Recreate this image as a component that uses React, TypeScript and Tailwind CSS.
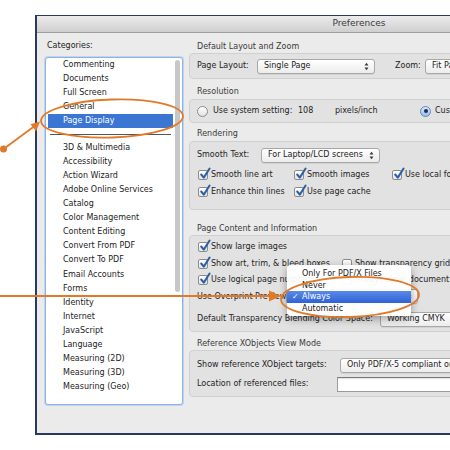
import React from "react";

const Arrows = () => (
  <svg width="5" height="9" viewBox="0 0 5 9" className="shrink-0">
    <path d="M0.5 3.5 L2.5 0.8 L4.5 3.5 Z" fill="#3a3a3a" />
    <path d="M0.5 5.5 L2.5 8.2 L4.5 5.5 Z" fill="#3a3a3a" />
  </svg>
);

function Sel({ cls, text }: { cls: string; text: string }) {
  return (
    <div
      className={`${cls} h-[15px] shrink-0 flex items-center justify-between pl-[6px] pr-[5px] rounded-[3px] border border-[#a8a8a8] bg-gradient-to-b from-white to-[#ececec] shadow-[0_1px_0_rgba(0,0,0,0.07)]`}
    >
      <span className="whitespace-nowrap overflow-hidden">{text}</span>
      <Arrows />
    </div>
  );
}

const Check = () => (
  <span className="relative w-[10px] h-[10px] shrink-0 rounded-[2px] border border-[#8c8c8c] bg-gradient-to-b from-white to-[#e4e4e4]">
    <svg className="absolute left-[0px] top-[-4px]" width="12" height="13" viewBox="0 0 12 13">
      <path d="M2.2 7.5 L4.8 10.6 L10.6 1.5" stroke="#2c5ea8" strokeWidth="2" fill="none" strokeLinecap="round" strokeLinejoin="round" />
    </svg>
  </span>
);

const Box = () => (
  <span className="w-[10px] h-[10px] shrink-0 rounded-[2px] border border-[#8c8c8c] bg-gradient-to-b from-white to-[#e8e8e8]" />
);

const items1 = ["Commenting", "Documents", "Full Screen", "General"];
const items2 = [
  "3D & Multimedia",
  "Accessibility",
  "Action Wizard",
  "Adobe Online Services",
  "Catalog",
  "Color Management",
  "Content Editing",
  "Convert From PDF",
  "Convert To PDF",
  "Email Accounts",
  "Forms",
  "Identity",
  "Internet",
  "JavaScript",
  "Language",
  "Measuring (2D)",
  "Measuring (3D)",
  "Measuring (Geo)",
];

function Row({ children }: { children: React.ReactNode }) {
  return <div className="h-[14.1px] flex items-center pl-[15px] whitespace-nowrap">{children}</div>;
}

function Header({ cls, text }: { cls: string; text: string }) {
  return <div className={`${cls} h-[12px] flex items-center pl-[8px] text-[#3a3a3a] whitespace-nowrap`}>{text}</div>;
}

export default function App() {
  return (
    <div className="w-[450px] h-[450px] bg-white overflow-hidden relative font-['DejaVu_Sans',sans-serif] text-[8px] text-[#222]">
      <div className="pt-[15px] pl-[35px]">
        <div className="w-[646px] h-[420px] border-l-2 border-t border-b-2 border-[#2a3a5c] flex flex-col overflow-hidden">
          <div className="h-[17px] shrink-0 bg-gradient-to-b from-[#ececec] to-[#cfcfcf] border-b border-[#9e9e9e] flex items-center justify-center text-[9px] text-[#3a3a3a]">
            Preferences
          </div>
          <div className="flex-1 bg-[#ebebeb] flex">
            {/* Left column */}
            <div className="w-[152px] shrink-0 pl-[8px] pt-[7px] flex flex-col">
              <div className="h-[12px] flex items-center pl-[2px]">Categories:</div>
              <div className="mt-[5px] w-[138px] h-[348px] border border-[#8fb2e2] ring-1 ring-[#bfd4ef] rounded-[3px] bg-white flex">
                <div className="w-[127px] pl-[2px] flex flex-col">
                  {items1.map((t) => (
                    <Row key={t}>{t}</Row>
                  ))}
                  <div className="h-[13.3px] flex items-center pl-[15px] bg-[#3a76d2] text-white whitespace-nowrap">
                    Page Display
                  </div>
                  <div className="h-[13px] flex items-center px-[2px]">
                    <div className="w-full h-px bg-[#555]" />
                  </div>
                  {items2.map((t) => (
                    <Row key={t}>{t}</Row>
                  ))}
                </div>
                <div className="flex-1 pt-[2px] flex justify-center">
                  <div className="w-[5px] h-[232px] rounded-full bg-[#c7c7c7]" />
                </div>
              </div>
            </div>

            {/* Right column */}
            <div className="flex-1 pt-[8px] flex flex-col pr-[12px]">
              <Header cls="" text="Default Layout and Zoom" />
              <div className="h-[26px] border border-[#d0d0d0] bg-[#e2e2e2] rounded-[4px] flex items-center pl-[7px]">
                <div className="w-[60px] whitespace-nowrap">Page Layout:</div>
                <Sel cls="w-[118px]" text="Single Page" />
                <div className="ml-[20px] w-[30px]">Zoom:</div>
                <Sel cls="w-[110px]" text="Fit Page" />
              </div>

              <Header cls="mt-[7px]" text="Resolution" />
              <div className="mt-[1px] h-[24px] border border-[#d0d0d0] bg-[#e2e2e2] rounded-[4px] flex items-center pl-[7px] whitespace-nowrap">
                <span className="w-[11px] h-[11px] shrink-0 rounded-full border border-[#8c8c8c] bg-gradient-to-b from-white to-[#e2e2e2]" />
                <div className="ml-[5px] w-[85px]">Use system setting:</div>
                <div className="w-[37px]">108</div>
                <div className="w-[85px]">pixels/inch</div>
                <span className="w-[11px] h-[11px] shrink-0 rounded-full border border-[#5f86bf] bg-gradient-to-b from-[#dbe8f8] to-[#9dbde6] flex items-center justify-center">
                  <span className="w-[4px] h-[4px] rounded-full bg-[#1d2f50]" />
                </span>
                <div className="ml-[4px]">Custom resolution:</div>
              </div>

              <Header cls="mt-[5px]" text="Rendering" />
              <div className="mt-[1px] h-[69px] border border-[#d0d0d0] bg-[#e2e2e2] rounded-[4px] flex flex-col pt-[5px] pl-[7px] whitespace-nowrap">
                <div className="h-[16px] flex items-center">
                  <div className="w-[64px]">Smooth Text:</div>
                  <Sel cls="w-[119px]" text="For Laptop/LCD screens" />
                </div>
                <div className="mt-[3px] h-[17px] flex items-center pl-[1px]">
                  <div className="w-[96px] flex items-center gap-[3px]">
                    <Check />
                    <span>Smooth line art</span>
                  </div>
                  <div className="w-[98px] flex items-center gap-[3px]">
                    <Check />
                    <span>Smooth images</span>
                  </div>
                  <div className="flex items-center gap-[3px]">
                    <Check />
                    <span>Use local fonts</span>
                  </div>
                </div>
                <div className="h-[17px] flex items-center pl-[1px]">
                  <div className="w-[96px] flex items-center gap-[3px]">
                    <Check />
                    <span>Enhance thin lines</span>
                  </div>
                  <div className="w-[98px] flex items-center gap-[3px]">
                    <Check />
                    <span>Use page cache</span>
                  </div>
                </div>
              </div>

              <Header cls="mt-[13px]" text="Page Content and Information" />
              <div className="h-[97px] border border-[#d0d0d0] bg-[#e2e2e2] rounded-[4px] flex flex-col pt-[3px] pl-[7px] whitespace-nowrap">
                <div className="h-[16.5px] flex items-center pl-[1px] gap-[3px]">
                  <Check />
                  <span>Show large images</span>
                </div>
                <div className="h-[16.5px] flex items-center pl-[1px]">
                  <div className="w-[144px] flex items-center gap-[3px]">
                    <Check />
                    <span>Show art, trim, &amp; bleed boxes</span>
                  </div>
                  <div className="flex items-center gap-[3px]">
                    <Box />
                    <span>Show transparency grid</span>
                  </div>
                </div>
                <div className="h-[16.5px] flex items-center pl-[1px]">
                  <div className="w-[144px] flex items-center gap-[3px]">
                    <Check />
                    <span>Use logical page numbers</span>
                  </div>
                  <div className="flex items-center gap-[3px]">
                    <Box />
                    <span>Always show document page size</span>
                  </div>
                </div>
                <div className="h-[16.5px] flex items-center">
                  <div className="w-[89px]">Use Overprint Preview:</div>
                  <Sel cls="w-[132px]" text="Always" />
                </div>
                <div className="mt-[6px] h-[16px] flex items-center">
                  <div className="w-[183px]">Default Transparency Blending Color Space:</div>
                  <Sel cls="w-[110px]" text="Working CMYK" />
                </div>
              </div>

              <Header cls="mt-[6px]" text="Reference XObjects View Mode" />
              <div className="h-[47px] border border-[#d0d0d0] bg-[#e2e2e2] rounded-[4px] flex flex-col pt-[6px] pl-[7px] whitespace-nowrap">
                <div className="h-[16px] flex items-center">
                  <div className="w-[143px]">Show reference XObject targets:</div>
                  <Sel cls="w-[200px]" text="Only PDF/X-5 compliant ones" />
                </div>
                <div className="mt-[3px] h-[16px] flex items-center">
                  <div className="w-[140px]">Location of referenced files:</div>
                  <div className="w-[200px] h-[15px] bg-white border border-[#9a9a9a] border-t-[#7a7a7a] shadow-[inset_0_1px_1px_rgba(0,0,0,0.12)]" />
                </div>
              </div>
            </div>
          </div>
        </div>
      </div>

      {/* Popup menu */}
      <div className="absolute left-[287px] top-[265px] w-[124px] h-[51px] bg-white/95 rounded-[4px] shadow-[0_3px_9px_rgba(0,0,0,0.35)] pt-[3px] whitespace-nowrap">
        <div className="h-[11.7px] flex items-center pl-[15px]">Only For PDF/X Files</div>
        <div className="h-[11.7px] flex items-center pl-[15px]">Never</div>
        <div className="relative h-[11.7px] flex items-center pl-[15px] bg-gradient-to-b from-[#5a8ae8] to-[#2f62d6] text-white">
          <span className="absolute left-[5px] top-[0px] leading-[11.7px]">✓</span>
          Always
        </div>
        <div className="h-[11.7px] flex items-center pl-[15px]">Automatic</div>
      </div>

      {/* Orange annotations */}
      <svg className="absolute left-0 top-0 pointer-events-none" width="450" height="450" viewBox="0 0 450 450">
        <ellipse cx="112" cy="118.5" rx="71" ry="19" fill="none" stroke="#e07a28" strokeWidth="1.8" transform="rotate(-2 112 118.5)" />
        <circle cx="3.5" cy="149" r="3.5" fill="#e07a28" />
        <line x1="3.5" y1="149" x2="34" y2="126.5" stroke="#e07a28" strokeWidth="1.8" />
        <path d="M40 121.5 L30.5 124.2 L36 131.5 Z" fill="#e07a28" />
        <line x1="0" y1="296" x2="272" y2="296" stroke="#e07a28" strokeWidth="1.8" />
        <path d="M281 296 L269 290.5 L269 301.5 Z" fill="#e07a28" />
        <ellipse cx="350" cy="297" rx="69" ry="20" fill="none" stroke="#e07a28" strokeWidth="1.8" transform="rotate(-2 350 297)" />
      </svg>
    </div>
  );
}
